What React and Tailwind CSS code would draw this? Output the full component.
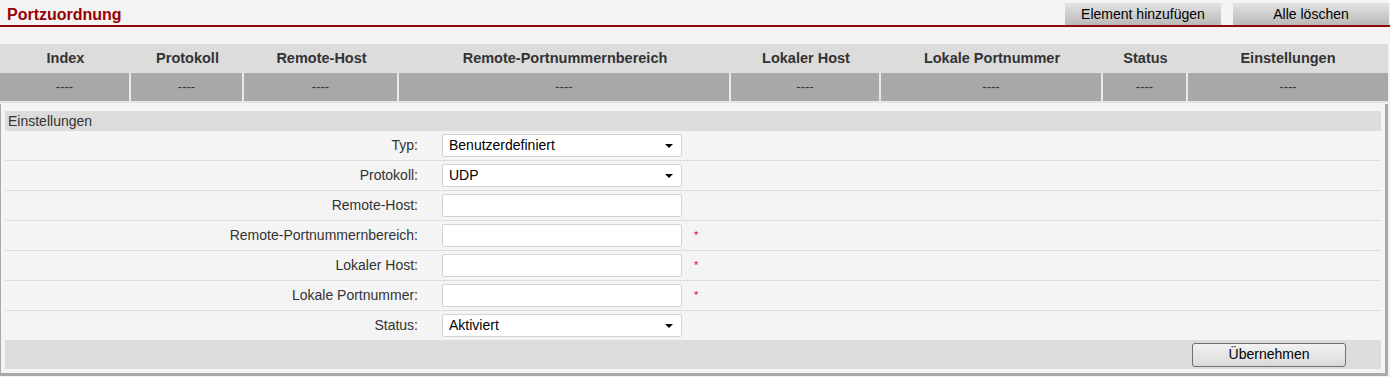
import React from 'react';

const cols = [
  { label: 'Index', w: 'w-[131px]' },
  { label: 'Protokoll', w: 'w-[113px]' },
  { label: 'Remote-Host', w: 'w-[155px]' },
  { label: 'Remote-Portnummernbereich', w: 'w-[332px]' },
  { label: 'Lokaler Host', w: 'w-[150px]' },
  { label: 'Lokale Portnummer', w: 'w-[222px]' },
  { label: 'Status', w: 'w-[85px]' },
  { label: 'Einstellungen', w: 'flex-1' },
];

const fields = [
  { label: 'Typ:', kind: 'select', value: 'Benutzerdefiniert' },
  { label: 'Protokoll:', kind: 'select', value: 'UDP' },
  { label: 'Remote-Host:', kind: 'input' },
  { label: 'Remote-Portnummernbereich:', kind: 'input', required: true },
  { label: 'Lokaler Host:', kind: 'input', required: true },
  { label: 'Lokale Portnummer:', kind: 'input', required: true },
  { label: 'Status:', kind: 'select', value: 'Aktiviert' },
];

function TopButton({ children }) {
  return (
    <button className="w-[156px] h-[22px] bg-linear-to-b from-[#e4e4e4] to-[#b9b9b9] text-[14px] text-black leading-none">
      {children}
    </button>
  );
}

function Field({ field }) {
  return (
    <div className="flex items-center h-[30px] border-b border-[#dcdcdc]">
      <div className="w-[413px] text-right text-[14px] text-[#333]">{field.label}</div>
      <div className="ml-[24px] w-[240px] h-[23px] bg-white border border-[#d4d4d4] rounded-[2px] flex items-center pl-[6px] pr-[8px]">
        {field.kind === 'select' && (
          <>
            <span className="flex-1 text-[14px] text-black">{field.value}</span>
            <span className="w-0 h-0 border-l-[4px] border-r-[4px] border-t-[4px] border-l-transparent border-r-transparent border-t-black" />
          </>
        )}
      </div>
      {field.required && <span className="ml-[12px] text-[11px] text-[#e0003c]">*</span>}
    </div>
  );
}

export default function App() {
  return (
    <div className="w-[1390px] h-[377px] bg-[#f4f4f4] font-['Liberation_Sans',Arial,sans-serif] overflow-hidden">
      {/* Titelzeile */}
      <div className="flex items-end justify-between h-[27px] border-b-2 border-[#8c0a0a]">
        <h1 className="pl-[7px] pb-[2px] text-[16px] font-bold text-[#990000] leading-none">Portzuordnung</h1>
        <div className="flex gap-[12px] pr-[1px]">
          <TopButton>Element hinzufügen</TopButton>
          <TopButton>Alle löschen</TopButton>
        </div>
      </div>

      {/* Tabelle */}
      <div className="mt-[17px] mr-[2px]">
        <div className="flex h-[29px] bg-[#dcdcdc] items-center">
          {cols.map((c) => (
            <div key={c.label} className={`${c.w} text-center text-[14.5px] font-bold text-[#333]`}>
              {c.label}
            </div>
          ))}
        </div>
        <div className="flex h-[30px] bg-[#a8a8a8] border-b-2 border-[#e6e6e6]">
          {cols.map((c, i) => (
            <div
              key={c.label}
              className={`${c.w} flex items-center justify-center text-[13px] text-[#333] ${i < cols.length - 1 ? 'border-r-2 border-[#e8e8e8]' : ''}`}
            >
              ----
            </div>
          ))}
        </div>
      </div>

      {/* Einstellungen */}
      <div className="mt-[1px] mr-[2px] border-l border-r-[3px] border-b-[3px] border-[#a9a9a9] px-[4px] pt-[7px] pb-[4px]">
        <div className="h-[20px] bg-[#dcdcdc] flex items-center pl-[3px] text-[14px] text-[#333]">Einstellungen</div>
        {fields.map((f) => (
          <Field key={f.label} field={f} />
        ))}
        <div className="h-[29px] bg-[#dcdcdc] flex items-center justify-end pr-[35px] -mt-px">
          <button className="w-[154px] h-[24px] border border-[#707070] rounded-[3px] bg-linear-to-b from-[#f2f2f2] to-[#dadada] text-[14px] text-black">
            Übernehmen
          </button>
        </div>
      </div>
    </div>
  );
}
